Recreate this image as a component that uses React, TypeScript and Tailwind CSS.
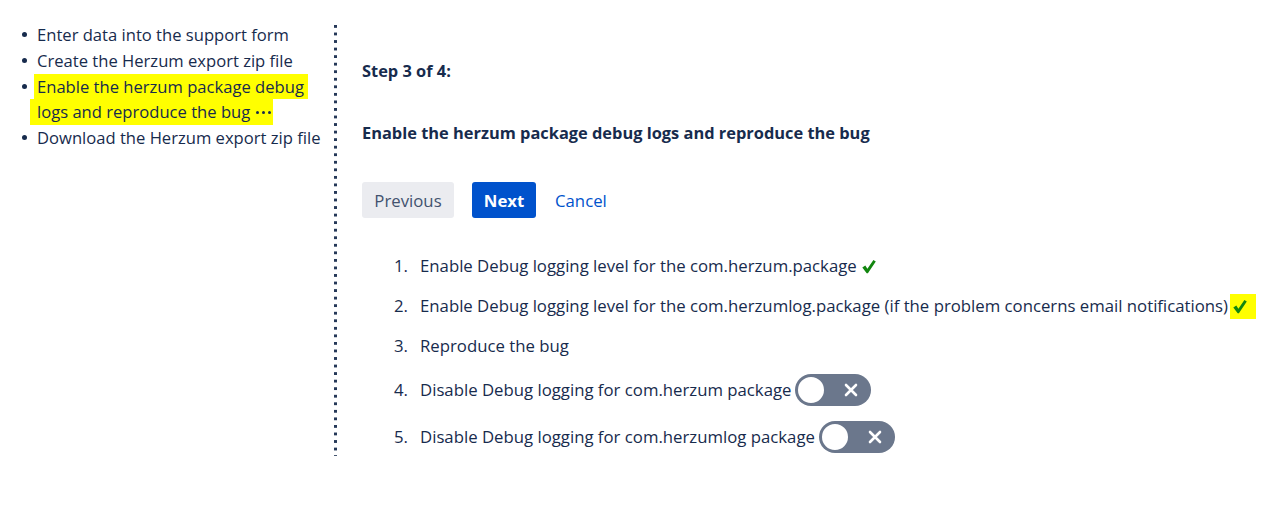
import React from "react";

function Toggle() {
  return (
    <span className="relative ml-[4px] inline-flex h-[32px] w-[76px] shrink-0 items-center rounded-full bg-[#6b778c] align-middle">
      <span className="ml-[1px] h-[30px] w-[30px] rounded-full border-2 border-[#6b778c] bg-white" />
      <svg className="absolute right-[13px] top-[9px]" width="14" height="14" viewBox="0 0 14 14">
        <path d="M2 2 L12 12 M12 2 L2 12" stroke="white" strokeWidth="2.6" strokeLinecap="round" />
      </svg>
    </span>
  );
}

function CheckSvg() {
  return (
    <svg width="14" height="15" viewBox="0 0 14 15">
      <path d="M0.3 8.6 L3.3 6.6 L5.4 9.8 L11.4 1 L13.8 2.4 L5.9 14.2 L4.7 14.2 Z" fill="#12860f" />
    </svg>
  );
}

function Check({ hl }: { hl?: boolean }) {
  return (
    <span
      className={
        "inline-flex items-center " +
        (hl ? "ml-[2px] h-[25px] w-[26px] justify-start bg-[#ffff00] pl-[3px]" : "ml-[5px]")
      }
    >
      <CheckSvg />
    </span>
  );
}

function Bullet() {
  return (
    <span className="flex h-[25.75px] w-[17px] shrink-0 items-center pl-[2px]">
      <span className="h-[5px] w-[5px] rounded-full bg-[#172b4d]" />
    </span>
  );
}

export default function App() {
  const items: React.ReactNode[] = [
    <>Enable Debug logging level for the com.herzum.package<Check /></>,
    <>Enable Debug logging level for the com.herzumlog.package (if the problem concerns email notifications)<Check hl /></>,
    <>Reproduce the bug</>,
    <>Disable Debug logging for com.herzum package<Toggle /></>,
    <>Disable Debug logging for com.herzumlog package<Toggle /></>,
  ];
  return (
    <div className="flex h-[524px] w-[1264px] bg-white text-[16.75px] text-[#172b4d] [font-family:'Open_Sans',sans-serif]">
      <div className="w-[334px] shrink-0 pl-[20px] pt-[22px] text-[16.6px]">
        <ul className="leading-[25.75px]">
          <li className="flex">
            <Bullet />
            <span>Enter data into the support form</span>
          </li>
          <li className="flex">
            <Bullet />
            <span>Create the Herzum export zip file</span>
          </li>
          <li className="flex">
            <Bullet />
            <span className="-ml-[3px] flex flex-col">
              <span className="w-fit bg-[#ffff00] pl-[3px] pr-[4px]">Enable the herzum package debug</span>
              <span className="-ml-[4px] flex w-fit items-center bg-[#ffff00] pl-[7px] pr-[2px]">
                logs and reproduce the bug
                <span className="ml-[6px] flex gap-[3px]">
                  <span className="h-[3px] w-[3px] rounded-full bg-[#172b4d]" />
                  <span className="h-[3px] w-[3px] rounded-full bg-[#172b4d]" />
                  <span className="h-[3px] w-[3px] rounded-full bg-[#172b4d]" />
                </span>
              </span>
            </span>
          </li>
          <li className="flex">
            <Bullet />
            <span>Download the Herzum export zip file</span>
          </li>
        </ul>
      </div>
      <div className="mt-[25px] h-[431px] w-[3px] shrink-0 bg-[linear-gradient(to_bottom,#253858_3px,transparent_3px)] bg-[length:3px_7.56px]" />
      <div className="flex-1 pl-[25px] pt-[59px]">
        <div className="text-[16.4px] font-bold leading-[24px]">Step 3 of 4:</div>
        <div className="mt-[38px] text-[16.4px] font-bold leading-[24px]">Enable the herzum package debug logs and reproduce the bug</div>
        <div className="mt-[37px] flex items-center">
          <button className="h-[36px] w-[92px] rounded-[3px] bg-[#ebecf0] pt-[1px] text-[#42526e]">Previous</button>
          <button className="ml-[18px] h-[36px] w-[64px] rounded-[3px] bg-[#0052cc] pt-[1px] font-bold text-white">Next</button>
          <button className="ml-[19px] h-[36px] pt-[1px] text-[#0052cc]">Cancel</button>
        </div>
        <ol className="mt-[36px] flex flex-col gap-[16px] pl-[30px]">
          {items.map((it, i) => (
            <li key={i} className={"flex items-center leading-[24px] " + (i >= 3 ? "h-[31px]" : "h-[24px]")}>
              <span className="w-[25px] shrink-0 pr-[9px] text-right">{i + 1}.</span>
              <span className="ml-[3px] flex items-center">{it}</span>
            </li>
          ))}
        </ol>
      </div>
    </div>
  );
}
